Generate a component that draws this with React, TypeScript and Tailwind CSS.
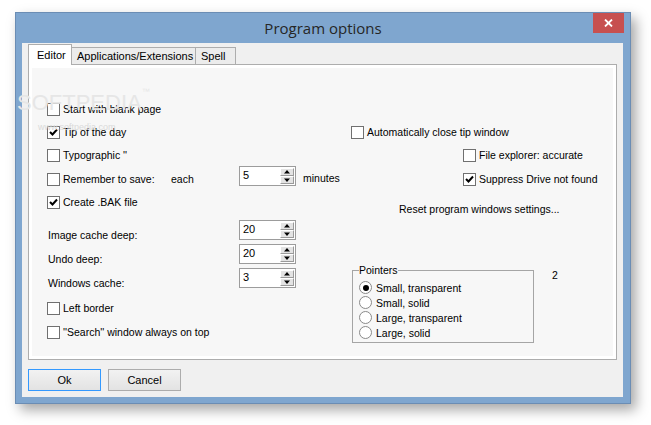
import React from "react";

const ui = { fontFamily: '"Liberation Sans", Arial, sans-serif' };

function Check({ checked = false }: { checked?: boolean }) {
  return (
    <span className="flex h-[13px] w-[13px] shrink-0 items-center justify-center border border-[#707070] bg-white">
      {checked && (
        <svg width="11" height="11" viewBox="0 0 11 11">
          <polyline points="2,5 4.5,7.5 9,2.5" fill="none" stroke="#000" strokeWidth="2" />
        </svg>
      )}
    </span>
  );
}

function CheckRow({ label, checked = false, className = "" }: { label: string; checked?: boolean; className?: string }) {
  return (
    <div className={`flex h-[14px] items-center gap-[3px] ${className}`}>
      <Check checked={checked} />
      <span className="leading-[14px] whitespace-nowrap">{label}</span>
    </div>
  );
}

function Spin({ value }: { value: string }) {
  return (
    <div className="flex h-[20px] w-[57px] shrink-0 border border-[#9c9c9c] bg-white">
      <span className="flex-1 pl-[3px] pt-[1px] text-[11px] leading-[14px]">{value}</span>
      <div className="mr-[1px] mt-[1px] flex w-[14px] flex-col">
        <span className="flex h-[8px] items-center justify-center border-t border-l border-b border-r border-t-white border-l-white border-b-[#9a9a9a] border-r-[#9a9a9a] bg-[#e3e3e3]">
          <svg width="6" height="4" viewBox="0 0 6 4">
            <polygon points="3,0 6,3.5 0,3.5" fill="#000" />
          </svg>
        </span>
        <span className="flex h-[8px] items-center justify-center border-t border-l border-b border-r border-t-white border-l-white border-b-[#9a9a9a] border-r-[#9a9a9a] bg-[#e3e3e3]">
          <svg width="6" height="4" viewBox="0 0 6 4">
            <polygon points="0,0.5 6,0.5 3,4" fill="#000" />
          </svg>
        </span>
      </div>
    </div>
  );
}

function Radio({ label, checked = false }: { label: string; checked?: boolean }) {
  return (
    <div className="flex h-[15px] items-center gap-[4px]">
      <span className="flex h-[13px] w-[13px] items-center justify-center rounded-full border border-[#8a8a8a] bg-white">
        {checked && <span className="h-[6px] w-[6px] rounded-full bg-black" />}
      </span>
      <span className="leading-[14px] whitespace-nowrap">{label}</span>
    </div>
  );
}

export default function App() {
  return (
    <div className="relative h-[425px] w-[651px] overflow-hidden bg-white pl-[15px] pt-[12px] text-[10.5px] text-black" style={ui}>
      {/* dialog window */}
      <div className="flex h-[392px] w-[616px] flex-col border border-[#6b8db4] bg-[#7fa6cf] shadow-[5px_6px_12px_rgba(0,0,0,0.35)]">
        {/* title bar */}
        <div className="relative flex h-[30px] shrink-0 items-center justify-center">
          <span className="text-[15px] text-[#262626]" style={{ fontFamily: '"Open Sans", "Noto Sans", sans-serif' }}>
            Program options
          </span>
          <button className="absolute right-[6px] top-0 flex h-[20px] w-[31px] items-center justify-center bg-[#c75050]">
            <svg width="9" height="8" viewBox="0 0 9 8">
              <path d="M1 0.5 L8 7.5 M8 0.5 L1 7.5" stroke="#fff" strokeWidth="1.8" />
            </svg>
          </button>
        </div>

        {/* client area */}
        <div className="mb-[6px] ml-[6px] mr-[7px] flex flex-1 flex-col bg-[#f0f0f0] px-[6px] pt-[1px]">
          {/* tabs */}
          <div className="relative z-10 flex h-[20px] items-end text-[11px]">
            <div className="-mb-[1px] flex h-[21px] w-[44px] items-start border border-b-0 border-[#adadad] bg-white pl-[8px] pt-[2px]">
              Editor
            </div>
            <div className="flex h-[17px] w-[124px] items-center border border-l-0 border-b-0 border-[#adadad] bg-[#ececec] pl-[5px]">
              Applications/Extensions
            </div>
            <div className="flex h-[17px] w-[40px] items-center border border-l-0 border-b-0 border-[#adadad] bg-[#ececec] pl-[5px]">
              Spell
            </div>
          </div>

          {/* tab panel */}
          <div className="h-[296px] w-[589px] border border-[#adadad] bg-white p-[3px]">
            <div className="flex h-full bg-[#f7f7f7] pl-[15px] pt-[34px]">
              {/* left column */}
              <div className="flex w-[304px] shrink-0 flex-col">
                <CheckRow label="Start with blank page" />
                <CheckRow label="Tip of the day" checked className="mt-[9px]" />
                <CheckRow label={"Typographic ''"} className="mt-[9px]" />
                <div className="mt-[4px] flex h-[20px] items-end">
                  <CheckRow label="Remember to save:" className="w-[124px]" />
                  <span className="h-[14px] w-[68px] leading-[14px]">each</span>
                  <Spin value="5" />
                  <span className="mb-[1px] ml-[7px] h-[14px] leading-[14px]">minutes</span>
                </div>
                <CheckRow label="Create .BAK file" checked className="mt-[9px]" />

                <div className="mt-[11px] flex h-[20px] items-end">
                  <span className="-mb-[2px] ml-[1px] w-[191px] leading-[14px]">Image cache deep:</span>
                  <Spin value="20" />
                </div>
                <div className="mt-[4px] flex h-[20px] items-end">
                  <span className="-mb-[2px] ml-[1px] w-[191px] leading-[14px]">Undo deep:</span>
                  <Spin value="20" />
                </div>
                <div className="mt-[4px] flex h-[20px] items-end">
                  <span className="-mb-[2px] ml-[1px] w-[191px] leading-[14px]">Windows cache:</span>
                  <Spin value="3" />
                </div>

                <CheckRow label="Left border" className="mt-[13px]" />
                <CheckRow label={"''Search'' window always on top"} className="mt-[10px]" />
              </div>

              {/* right column */}
              <div className="flex flex-col">
                <CheckRow label="Automatically close tip window" className="mt-[23px]" />
                <CheckRow label="File explorer: accurate" className="ml-[112px] mt-[9px]" />
                <CheckRow label="Suppress Drive not found" checked className="ml-[112px] mt-[10px]" />
                <span className="ml-[48px] mt-[16px] h-[14px] leading-[14px]">Reset program windows settings...</span>

                <div className="mt-[47px] flex items-start">
                  <fieldset className="ml-[1px] h-[80px] w-[182px] border border-[#a5a5a5] px-[6px]">
                    <legend className="px-0 leading-[14px]">Pointers</legend>
                    <div className="mt-[3px] flex flex-col">
                      <Radio label="Small, transparent" checked />
                      <Radio label="Small, solid" />
                      <Radio label="Large, transparent" />
                      <Radio label="Large, solid" />
                    </div>
                  </fieldset>
                  <span className="ml-[18px] mt-[5px] leading-[14px]">2</span>
                </div>
              </div>
            </div>
          </div>

          {/* buttons */}
          <div className="mt-[9px] flex gap-[7px] text-[11px]">
            <button className="flex h-[22px] w-[73px] items-center justify-center border border-[#3399ff] bg-gradient-to-b from-[#f2f2f2] to-[#e3e3e3]">
              Ok
            </button>
            <button className="flex h-[22px] w-[73px] items-center justify-center border border-[#acacac] bg-gradient-to-b from-[#f2f2f2] to-[#e3e3e3]">
              Cancel
            </button>
          </div>
        </div>
      </div>

      {/* watermark */}
      <div className="pointer-events-none absolute left-[17px] top-[86px] text-[22px] text-[#e6e6e6]" style={{ fontFamily: '"Liberation Sans", sans-serif' }}>
        SOFTPEDIA<span className="align-top text-[8px]">™</span>
      </div>
      <div className="pointer-events-none absolute left-[38px] top-[121px] text-[9px] text-[#dadada]">www.softpedia.com</div>
    </div>
  );
}
